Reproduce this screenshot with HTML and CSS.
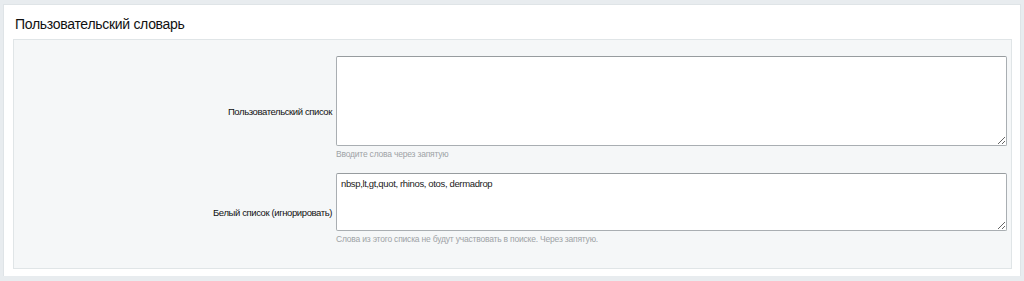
FILE: index.html
```html
<!DOCTYPE html>
<html lang="ru">
<head>
    <meta charset="UTF-8">
    <meta name="viewport" content="width=device-width, initial-scale=1.0">
    <title>Пользовательский словарь</title>
    <link rel="stylesheet" href="styles.css">
</head>
<body>
    <div class="card">
        <h2 class="card-title">Пользовательский словарь</h2>
        <div class="panel">
            <div class="row">
                <label class="row-label" for="user-list">Пользовательский список</label>
                <div class="row-field">
                    <textarea id="user-list" class="area area-tall"></textarea>
                    <div class="hint">Вводите слова через запятую</div>
                </div>
            </div>
            <div class="row">
                <label class="row-label" for="white-list">Белый список (игнорировать)</label>
                <div class="row-field">
                    <textarea id="white-list" class="area area-short">nbsp,lt,gt,quot, rhinos, otos, dermadrop</textarea>
                    <div class="hint">Слова из этого списка не будут участвовать в поиске. Через запятую.</div>
                </div>
            </div>
        </div>
    </div>
</body>
</html>
```

FILE: styles.css
```css
body {
    margin: 0;
    padding: 4px 3px 0 3px;
    background-color: #e8ecef;
    font-family: "Liberation Sans", Arial, sans-serif;
    color: #000;
}
.card {
    background-color: #fff;
    border: 1px solid #dfe4e7;
    border-bottom: none;
    padding: 0 8px 8px 9px;
    height: 272px;
    box-sizing: border-box;
}
.card-title {
    margin: 0;
    padding: 11px 0 0 2px;
    height: 34px;
    box-sizing: border-box;
    font-size: 14px;
    letter-spacing: -0.3px;
    font-weight: normal;
    color: #111;
}
.panel {
    background-color: #f5f7f8;
    border: 1px solid #e0e5e7;
    padding: 16px 0 0 0;
    height: 230px;
    box-sizing: border-box;
}
.row {
    display: grid;
    grid-template-columns: 318px 1fr;
    gap: 4px;
    align-items: center;
    margin-bottom: 14px;
}
.row-label {
    text-align: right;
    font-size: 9.5px;
    letter-spacing: -0.4px;
    padding-top: 8px;
    color: #111;
}
.row-field {
    padding-right: 4px;
}
.area {
    display: block;
    width: 100%;
    box-sizing: border-box;
    border: 1px solid #a9aeb2;
    border-top-color: #979c9f;
    border-radius: 2px;
    background-color: #fff;
    font-family: "Liberation Sans", Arial, sans-serif;
    font-size: 9.5px;
    letter-spacing: -0.35px;
    padding: 4px 4px;
    margin: 0;
    resize: vertical;
    color: #222;
}
.area-tall {
    height: 90px;
}
.area-short {
    height: 58px;
}
.hint {
    margin-top: 3px;
    font-size: 8.5px;
    letter-spacing: -0.2px;
    color: #9ea3a6;
}
```
